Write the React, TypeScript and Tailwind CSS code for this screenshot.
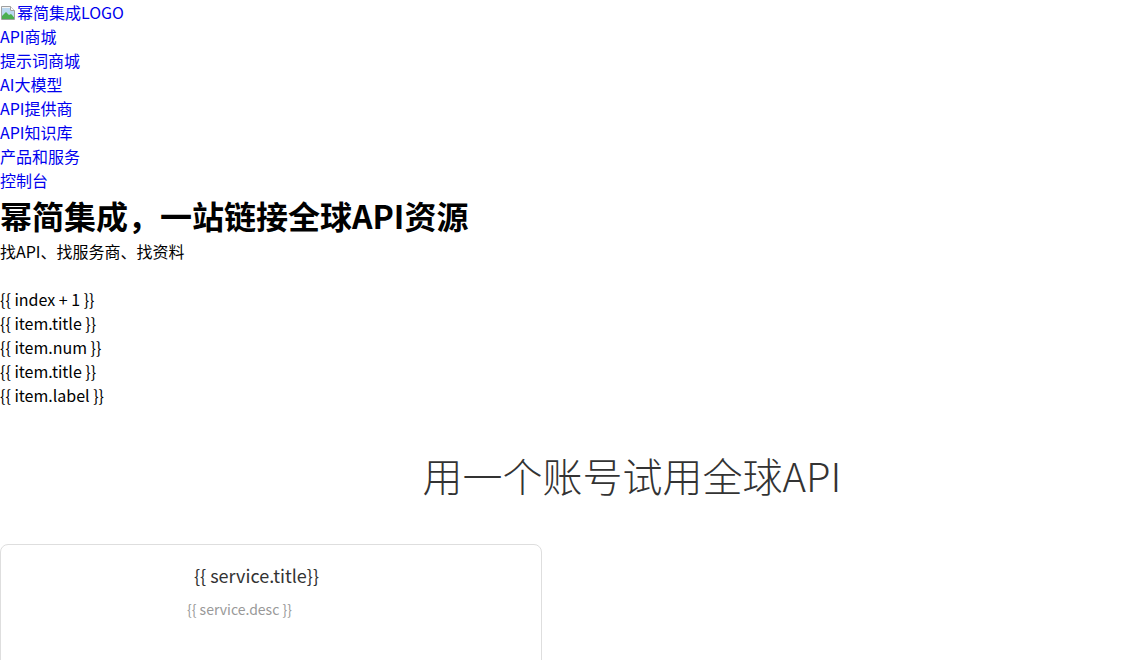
const navLinks = ["API商城", "提示词商城", "AI大模型", "API提供商", "API知识库", "产品和服务", "控制台"];

const stats = ["{{ index + 1 }}", "{{ item.title }}", "{{ item.num }}", "{{ item.title }}", "{{ item.label }}"];

const BrokenImage = () => (
  <svg width="16" height="16" viewBox="0 0 16 16" className="mr-px inline-block align-[-2px]">
    <path d="M1.5 1.5h9l4 4v9h-13z" fill="#f4f4f4" stroke="#a0a0a0" />
    <path d="M10.5 1.5v4h4" fill="#fff" stroke="#a0a0a0" />
    <path d="M2 3h8v3h4v5H2z" fill="#bcd8f0" />
    <path d="M2 11l4-4 3 3 2-1 3 3v2H2z" fill="#4caf50" />
  </svg>
);

export default function App() {
  return (
    <div className="min-h-[660px] bg-white text-base leading-6 text-black font-['Noto_Sans_CJK_SC','Noto_Sans',sans-serif]">
      <header>
        <a href="#" className="block text-[#0000ee]">
          <BrokenImage />
          幂简集成LOGO
        </a>
        <nav>
          {navLinks.map((link) => (
            <a key={link} href="#" className="block text-[#0000ee]">
              {link}
            </a>
          ))}
        </nav>
      </header>

      <section>
        <h1 className="text-[32px] leading-[47px] font-bold">幂简集成，一站链接全球API资源</h1>
        <p>找API、找服务商、找资料</p>
        <div className="mt-6">
          {stats.map((s, i) => (
            <div key={i}>{s}</div>
          ))}
        </div>
      </section>

      <section className="mt-[38px]">
        <h2 className="pl-[124px] text-center text-[40px] leading-[60px] font-light text-[#333]">
          用一个账号试用全球API
        </h2>
        <div className="mt-[39px] w-[542px] h-[140px] rounded-lg border border-[#dedede] pt-[17px]">
          <div className="pl-[193px] text-[18px] leading-[27px] text-[#333]">{"{{ service.title}}"}</div>
          <div className="mt-[10px] pl-[186px] text-sm leading-[21px] text-[#999]">{"{{ service.desc }}"}</div>
        </div>
      </section>
    </div>
  );
}
